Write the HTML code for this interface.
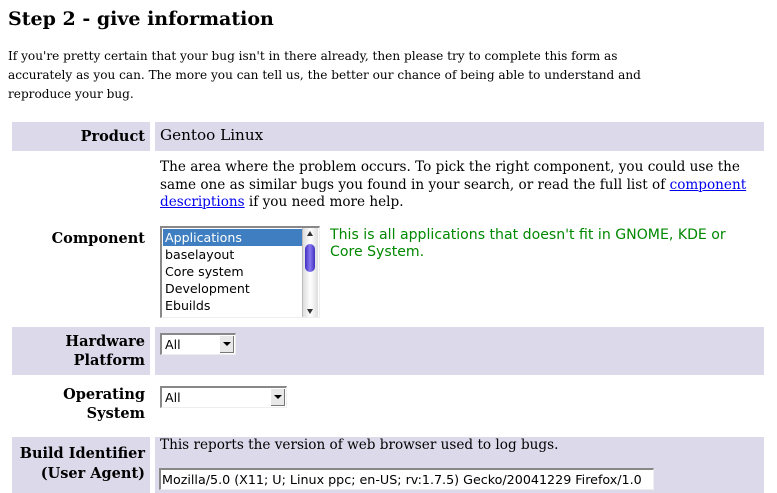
<!DOCTYPE html>
<html><head><style>
body{margin:0;width:777px;height:493px;background:#fff;position:relative;overflow:hidden;font-family:"DejaVu Serif","Liberation Serif",serif;font-size:13px;color:#000}
.a{position:absolute;white-space:nowrap}
.bg{position:absolute;background:#dcdaea}
.lab{position:absolute;font-weight:bold;text-align:right;font-size:14.5px;line-height:19px;right:632px}
.sans{font-family:"DejaVu Sans","Liberation Sans",sans-serif;font-size:12.6px}
.sel{position:absolute;background:#fff;border-top:2px solid #888;border-left:2px solid #888;border-right:1px solid #eee;border-bottom:1px solid #eee;box-sizing:border-box}
.btn{position:absolute;top:1px;right:1px;width:14px;bottom:1px;background:#e8e8e8;border-right:1px solid #777;border-bottom:1px solid #777;box-sizing:border-box}
.tri{position:absolute;left:3px;top:6px;width:0;height:0;border-left:4px solid transparent;border-right:4px solid transparent;border-top:4px solid #000}
</style></head><body>
<div class="a" style="left:8px;top:8px;font-size:19px;font-weight:bold">Step 2 - give information</div>
<div class="a" style="left:8px;top:47px;line-height:19px;font-size:12.1px">If you're pretty certain that your bug isn't in there already, then please try to complete this form as<br>accurately as you can. The more you can tell us, the better our chance of being able to understand and<br>reproduce your bug.</div>

<div class="bg" style="left:12px;top:122px;width:138px;height:29px"></div>
<div class="bg" style="left:155px;top:122px;width:609px;height:29px"></div>
<div class="lab" style="top:127px">Product</div>
<div class="a" style="left:160px;top:126px;font-size:15.2px">Gentoo Linux</div>

<div class="a" style="left:160px;top:159px;line-height:17.5px;font-size:13.6px">The area where the problem occurs. To pick the right component, you could use the<br>same one as similar bugs you found in your search, or read the full list of <span style="color:#00e;text-decoration:underline">component</span><br><span style="color:#00e;text-decoration:underline">descriptions</span> if you need more help.</div>
<div class="lab" style="top:229px">Component</div>
<div class="sel sans" style="left:160px;top:226px;width:160px;height:92px">
 <div style="position:absolute;left:1px;top:1px;width:141px;height:17px;background:#3f7fc1"></div>
 <div style="position:absolute;left:3px;top:1px;line-height:17px"><span style="color:#fff">Applications</span><br>baselayout<br>Core system<br>Development<br>Ebuilds</div>
 <div style="position:absolute;right:1px;top:0;width:15px;bottom:0;background:linear-gradient(90deg,#ddd,#fff,#ddd);border-left:1px solid #bbb">
  <div style="position:absolute;left:4px;top:3px;border-left:3px solid transparent;border-right:3px solid transparent;border-bottom:5px solid #333"></div>
  <div style="position:absolute;left:2px;top:16px;width:10px;height:28px;border-radius:5px;background:linear-gradient(90deg,#4030c0,#8878f0,#4030c0)"></div>
  <div style="position:absolute;left:4px;bottom:3px;border-left:3px solid transparent;border-right:3px solid transparent;border-top:5px solid #333"></div>
 </div>
</div>
<div class="a sans" style="left:330px;top:227px;color:#080;font-size:14.1px;line-height:17px">This is all applications that doesn't fit in GNOME, KDE or<br>Core System.</div>

<div class="bg" style="left:12px;top:327px;width:138px;height:48px"></div>
<div class="bg" style="left:155px;top:327px;width:609px;height:48px"></div>
<div class="lab" style="top:332px">Hardware<br>Platform</div>
<div class="sel sans" style="left:160px;top:333px;width:76px;height:22px"><span style="position:absolute;left:3px;top:2px">All</span><div class="btn"><div class="tri"></div></div></div>

<div class="lab" style="top:385px">Operating<br>System</div>
<div class="sel sans" style="left:160px;top:386px;width:127px;height:22px"><span style="position:absolute;left:3px;top:2px">All</span><div class="btn"><div class="tri"></div></div></div>

<div class="bg" style="left:12px;top:437px;width:138px;height:56px"></div>
<div class="bg" style="left:155px;top:437px;width:609px;height:56px"></div>
<div class="lab" style="top:444px;line-height:20px">Build Identifier<br>(User Agent)</div>
<div class="a" style="left:160px;top:437px;font-size:13.6px">This reports the version of web browser used to log bugs.</div>
<div class="sel sans" style="left:159px;top:468px;width:495px;height:22px"><span style="position:absolute;left:1px;top:2px;font-size:12.7px">Mozilla/5.0 (X11; U; Linux ppc; en-US; rv:1.7.5) Gecko/20041229 Firefox/1.0</span></div>
</body></html>
